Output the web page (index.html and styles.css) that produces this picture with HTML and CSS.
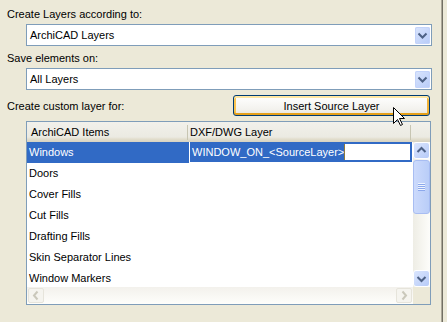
FILE: index.html
```html
<!DOCTYPE html>
<html lang="en">
<head>
    <meta charset="UTF-8">
    <title>DXF/DWG Layers</title>
    <link rel="stylesheet" href="styles.css">
</head>
<body>
    <div class="window">
        <div class="pane">
            <div class="label">Create Layers according to:</div>
            <div class="combo">
                <span class="combo-text">ArchiCAD Layers</span>
                <span class="drop"><svg width="15" height="17" viewBox="0 0 15 17"><path d="M3.5 6.5 L7.5 10.5 L11.5 6.5" class="chev"/></svg></span>
            </div>

            <div class="label next">Save elements on:</div>
            <div class="combo">
                <span class="combo-text">All Layers</span>
                <span class="drop"><svg width="15" height="17" viewBox="0 0 15 17"><path d="M3.5 6.5 L7.5 10.5 L11.5 6.5" class="chev"/></svg></span>
            </div>

            <div class="custom-row">
                <span class="custom-label">Create custom layer for:</span>
                <button class="insert">Insert Source Layer</button>
            </div>

            <div class="list">
                <div class="list-head">
                    <div class="h1">ArchiCAD Items</div>
                    <div class="sep"></div>
                    <div class="h2">DXF/DWG Layer</div>
                    <div class="sep"></div>
                </div>
                <div class="list-mid">
                    <div class="rows">
                        <div class="row sel">
                            <div class="c1">Windows</div>
                            <div class="edit"><span class="hl">WINDOW_ON_&lt;SourceLayer&gt;</span><span class="caret"></span></div>
                        </div>
                        <div class="row"><div class="c1">Doors</div></div>
                        <div class="row"><div class="c1">Cover Fills</div></div>
                        <div class="row"><div class="c1">Cut Fills</div></div>
                        <div class="row"><div class="c1">Drafting Fills</div></div>
                        <div class="row"><div class="c1">Skin Separator Lines</div></div>
                        <div class="row"><div class="c1">Window Markers</div></div>
                    </div>
                    <div class="vscroll">
                        <div class="sbtn"><svg width="15" height="15" viewBox="0 0 15 15"><path d="M3.5 9 L7.5 5 L11.5 9" class="chev"/></svg></div>
                        <div class="thumb"><div class="grip"></div></div>
                        <div class="sbtn down"><svg width="15" height="15" viewBox="0 0 15 15"><path d="M3.5 6 L7.5 10 L11.5 6" class="chev"/></svg></div>
                    </div>
                </div>
                <div class="list-foot">
                    <div class="hscroll">
                        <div class="hbtn"><svg width="14" height="13" viewBox="0 0 14 13"><path d="M8.5 2.5 L5 6.5 L8.5 10.5" class="chev off"/></svg></div>
                        <div class="hbtn"><svg width="14" height="13" viewBox="0 0 14 13"><path d="M5.5 2.5 L9 6.5 L5.5 10.5" class="chev off"/></svg></div>
                    </div>
                    <div class="corner"></div>
                </div>
            </div>
        </div>
        <div class="edge"></div>
    </div>

    <svg class="cursor" width="13" height="20" viewBox="0 0 13 20">
        <path d="M0.5 0.5 L0.5 16.5 L4.5 12.5 L7.5 18.5 L9.5 17.5 L6.5 11.5 L11.5 11.5 Z" fill="#fff" stroke="#000"/>
    </svg>
</body>
</html>
```

FILE: styles.css
```css
body {
    margin: 0;
    background: #ECE9D8;
    font-family: "Liberation Sans", Arial, sans-serif;
    font-size: 11px;
    color: #000;
}

.window {
    display: flex;
    width: 447px;
    height: 322px;
}

.pane {
    width: 441px;
    padding-top: 8px;
}

.edge {
    width: 1px;
    background: #ACA899;
    border-right: 1px solid #716F64;
}

.label {
    line-height: 13px;
    padding-left: 7px;
}
.label.next {
    margin-top: 6px;
}

/* combo boxes */
.combo {
    margin: 3px 0 0 26px;
    width: 406px;
    height: 22px;
    box-sizing: border-box;
    border: 1px solid #7F9DB9;
    background: #fff;
    display: flex;
    align-items: center;
}
.combo-text {
    flex: 1;
    padding-left: 3px;
}
.drop {
    width: 15px;
    height: 17px;
    margin-right: 1px;
    box-sizing: border-box;
    border-radius: 2px;
    background: linear-gradient(135deg, #DAE5FD, #B7CBF8);
    box-shadow: inset 0 0 0 1px #C3D3FA;
    display: flex;
}
.chev {
    fill: none;
    stroke: #4D6185;
    stroke-width: 2;
}
.chev.off {
    stroke: #CAC8BB;
}

/* insert row */
.custom-row {
    display: flex;
    align-items: center;
    margin-top: 5px;
    height: 21px;
}
.custom-label {
    flex: 0 0 233px;
    box-sizing: border-box;
    padding-left: 7px;
}
.insert {
    width: 197px;
    height: 21px;
    padding: 0;
    border: 1px solid #003C74;
    border-radius: 3px;
    background: linear-gradient(#FFFFFF, #F3F2EE 70%, #E6E4DA);
    box-shadow: inset 0 2px #FFE7A2, inset 0 -2px #E5A01A, inset 2px 0 #FAC451, inset -2px 0 #F1B43A;
    font: inherit;
    color: #000;
}

/* list view */
.list {
    margin: 5px 0 0 26px;
    width: 405px;
    height: 184px;
    box-sizing: border-box;
    border: 1px solid #7F9DB9;
    background: #fff;
    display: flex;
    flex-direction: column;
}
.list-head {
    flex: none;
    height: 20px;
    display: flex;
    align-items: center;
    background: linear-gradient(#F2F1EB, #EBEAE2 75%, #E2DECD 85%, #D6D2C2);
}
.h1 {
    width: 156px;
    padding-left: 4px;
}
.h2 {
    width: 220px;
    padding-left: 2px;
}
.sep {
    width: 1px;
    height: 15px;
    background: #C7C5B2;
}

.list-mid {
    display: flex;
    height: 145px;
}
.rows {
    flex: 1;
    overflow: hidden;
}
.row {
    display: flex;
    height: 21px;
    line-height: 21px;
}
.c1 {
    width: 160px;
    padding-left: 2px;
}
.sel .c1 {
    background: #316AC5;
    color: #fff;
}
.edit {
    margin-left: 1px;
    width: 222px;
    height: 20px;
    box-sizing: border-box;
    border: 2px solid #316AC5;
    background: #fff;
    line-height: 16px;
    display: flex;
}
.hl {
    background: #316AC5;
    color: #fff;
}
.caret {
    width: 1px;
    background: #8C7A3E;
}

/* scroll bars */
.vscroll {
    width: 17px;
    display: flex;
    flex-direction: column;
    background: linear-gradient(to right, #EEEDE5, #FDFDFA);
}
.sbtn {
    width: 17px;
    height: 17px;
    box-sizing: border-box;
    border: 1px solid #fff;
    border-radius: 3px;
    background: linear-gradient(135deg, #DAE5FD, #B7CBF8);
    display: flex;
}
.sbtn.down {
    margin-top: auto;
}
.thumb {
    margin-top: 1px;
    height: 54px;
    box-sizing: border-box;
    border: 1px solid #A8BDF2;
    border-radius: 3px;
    background: linear-gradient(to right, #CCDAFC, #B9CDF8);
    display: flex;
    align-items: center;
    justify-content: center;
}
.grip {
    width: 7px;
    height: 8px;
    background: repeating-linear-gradient(#EEF4FE 0 1px, #8CA8EC 1px 2px);
}

.list-foot {
    flex: none;
    display: flex;
    height: 17px;
}
.hscroll {
    flex: 1;
    display: flex;
    justify-content: space-between;
    background: linear-gradient(#F3F1EC, #FEFEFB);
}
.hbtn {
    width: 16px;
    height: 15px;
    margin: 1px;
    box-sizing: border-box;
    border: 1px solid #E6E4DB;
    border-radius: 2px;
    background: #F5F4EF;
    display: flex;
}
.corner {
    width: 17px;
    background: #ECE9D8;
}

.cursor {
    position: absolute;
    left: 393px;
    top: 107px;
}
```
